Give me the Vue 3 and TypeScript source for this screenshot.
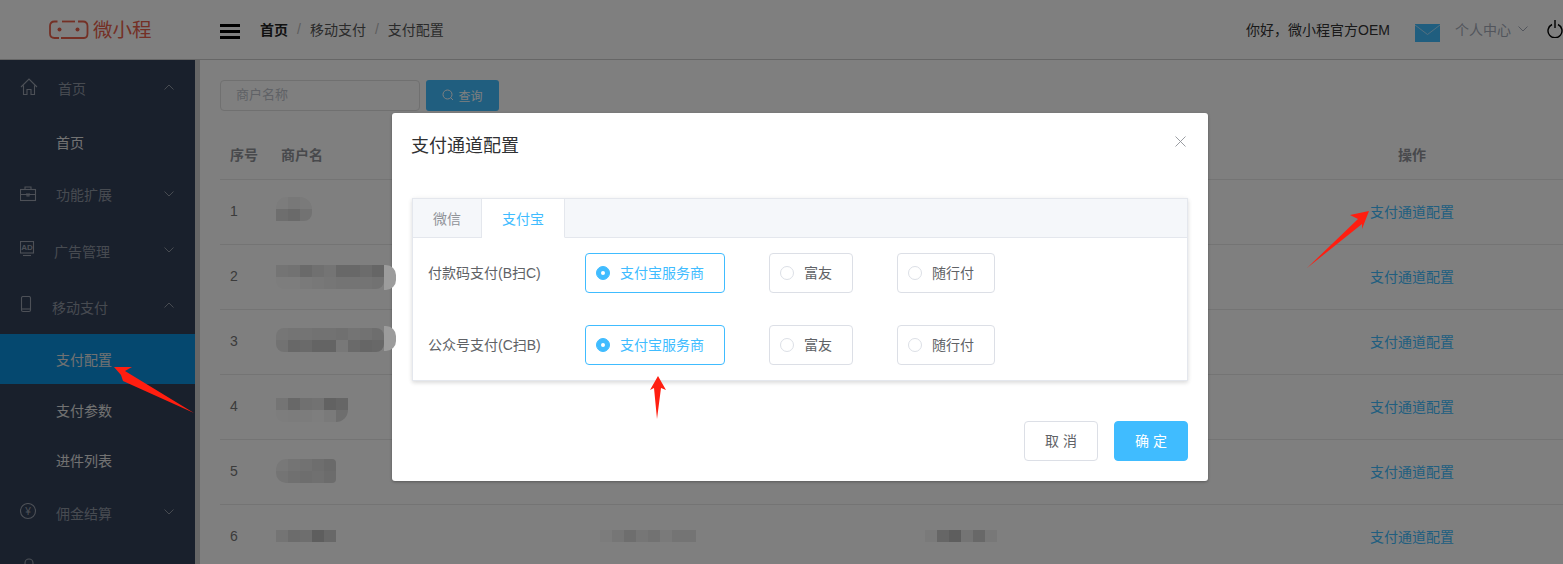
<script setup lang="ts">
interface NavItem { label: string; kind: 'group' | 'sub' | 'active'; h: number; icon?: string; x: number; dy: number; open?: boolean }
const nav: NavItem[] = [
  { label: '首页', kind: 'group', h: 58, icon: 'home', x: 58, dy: -1, open: true },
  { label: '首页', kind: 'sub', h: 50, x: 56, dy: -1 },
  { label: '功能扩展', kind: 'group', h: 56, icon: 'case', x: 56, dy: -2 },
  { label: '广告管理', kind: 'group', h: 56, icon: 'ad', x: 54, dy: -1 },
  { label: '移动支付', kind: 'group', h: 54, icon: 'phone', x: 52, dy: 0, open: true },
  { label: '支付配置', kind: 'active', h: 50, x: 56, dy: 0 },
  { label: '支付参数', kind: 'sub', h: 52, x: 56, dy: 0 },
  { label: '进件列表', kind: 'sub', h: 50, x: 56, dy: -1 },
  { label: '佣金结算', kind: 'group', h: 56, icon: 'yen', x: 56, dy: -1 },
  { label: '', kind: 'group', h: 52, icon: 'user', x: 56, dy: 0 },
]
interface Blur { cols: number; levels: number[]; radius: string; shift: number }
interface Row { no: number; name: Blur; a?: Blur; b?: Blur }
const rows: Row[] = [
  { no: 1, name: { cols: 3, levels: [124, 120, 122, 110, 106, 114], radius: '10px 12px 8px 0', shift: -6 } },
  { no: 2, name: { cols: 9, levels: [116, 114, 106, 112, 116, 104, 104, 108, 102, 125, 125, 122, 120, 118, 116, 116, 116, 114], radius: '0 0 8px 8px', shift: -1 } },
  { no: 3, name: { cols: 9, levels: [118, 116, 116, 114, 114, 112, 116, 114, 110, 114, 104, 106, 100, 100, 120, 106, 102, 104], radius: '8px', shift: -5 } },
  { no: 4, name: { cols: 6, levels: [116, 104, 112, 114, 98, 102, 125, 124, 124, 126, 122, 110], radius: '0 0 12px 8px', shift: 5 } },
  { no: 5, name: { cols: 5, levels: [120, 116, 114, 110, 106, 116, 112, 110, 112, 108], radius: '10px 4px 4px 10px', shift: -3 } },
  {
    no: 6,
    name: { cols: 5, levels: [116, 108, 110, 94, 104], radius: '0', shift: -2 },
    a: { cols: 8, levels: [124, 118, 110, 118, 114, 122, 116, 116], radius: '0', shift: -2 },
    b: { cols: 6, levels: [122, 102, 94, 116, 104, 120], radius: '0', shift: -2 },
  },
]
const grey = (v: number) => `rgb(${v * 2},${v * 2},${v * 2})`
const blurStyle = (b: Blur) => ({
  gridTemplateColumns: `repeat(${b.cols}, 12px)`,
  borderRadius: b.radius,
  marginTop: `${b.shift}px`,
})
const payRows = [
  { label: '付款码支付(B扫C)' },
  { label: '公众号支付(C扫B)' },
]
const channels = [
  { name: '支付宝服务商', on: true },
  { name: '富友', on: false },
  { name: '随行付', on: false },
]
</script>

<template>
  <div class="app">
    <header class="top">
      <div class="logo">
        <svg class="logo-mark" width="40" height="20" viewBox="0 0 40 20" fill="none" stroke="#e8604a" stroke-width="1.8">
          <path d="M8.5 1.5H5.5Q1 1.5 1 6V13.5Q1 18 5.5 18H10" />
          <path d="M13 1.5H26" />
          <path d="M12 18H35Q38.5 18 38.5 13.5V6Q38.500 1.500 34 1.500H29" />
          <circle cx="10.5" cy="9.5" r="2" fill="#e8604a" stroke="none" />
          <circle cx="28.5" cy="9.5" r="2" fill="#e8604a" stroke="none" />
        </svg>
        <span class="logo-text">微小程</span>
      </div>
      <div class="bar">
        <div class="burger"><i></i><i></i><i></i></div>
        <nav class="crumbs">
          <b>首页</b><span class="sep">/</span><span>移动支付</span><span class="sep">/</span><span>支付配置</span>
        </nav>
        <div class="user">
          <span class="hello">你好，微小程官方OEM</span>
          <svg class="mail" width="25" height="18" viewBox="0 0 25 18">
            <rect width="25" height="18" fill="#40bcff" />
            <path d="M0 1L12.5 10.5L25 1" fill="none" stroke="#a8e0ff" stroke-width="1" />
          </svg>
          <span class="me">个人中心</span>
          <svg class="me-chev" width="10" height="6" viewBox="0 0 10 6" fill="none" stroke="#a4abb8" stroke-width="1"><path d="M.5.5L5 5L9.5.5" /></svg>
          <svg class="power" width="16" height="18" viewBox="0 0 16 18" fill="none" stroke="#000" stroke-width="1.4">
            <path d="M5 4.5A7 7 0 1 0 11 4.5" />
            <path d="M8 0V8" />
          </svg>
        </div>
      </div>
    </header>

    <div class="body">
      <aside class="side">
        <div class="side-in">
          <div
            v-for="(n, i) in nav"
            :key="i"
            class="nav-item"
            :class="n.kind"
            :style="{ height: n.h + 'px' }"
          >
            <span v-if="n.icon" class="ico">
              <svg v-if="n.icon === 'home'" width="18" height="18" viewBox="0 0 18 18" fill="none" stroke="currentColor" stroke-width="1.1">
                <path d="M1 9L9 1L17 9M3.5 7.5V16.5H7V11.5H11V16.5H14.5V7.5" />
              </svg>
              <svg v-else-if="n.icon === 'case'" width="18" height="16" viewBox="0 0 18 16" fill="none" stroke="currentColor" stroke-width="1.1">
                <rect x=".5" y="3.5" width="15" height="11" />
                <path d="M5 3.5V1H11V3.5M.5 8.5H15.5M7 7V10H9V7" />
              </svg>
              <svg v-else-if="n.icon === 'ad'" width="16" height="18" viewBox="0 0 16 18" fill="none" stroke="currentColor" stroke-width="1.1">
                <rect x=".5" y=".5" width="13" height="11.5" />
                <path d="M3 14.5H11" />
                <text x="7" y="9" text-anchor="middle" class="ad-txt">AD</text>
              </svg>
              <svg v-else-if="n.icon === 'phone'" width="16" height="18" viewBox="0 0 16 18" fill="none" stroke="currentColor" stroke-width="1.1">
                <rect x="1.5" y=".5" width="9" height="15" rx="1.5" />
                <path d="M1.5 13H10.5" />
              </svg>
              <svg v-else-if="n.icon === 'yen'" width="18" height="18" viewBox="0 0 18 18" fill="none" stroke="currentColor" stroke-width="1.1">
                <circle cx="8" cy="8" r="7.5" />
                <text x="8" y="11.5" text-anchor="middle" class="yen-txt">¥</text>
              </svg>
              <svg v-else width="18" height="18" viewBox="0 0 18 18" fill="none" stroke="currentColor" stroke-width="1.1">
                <circle cx="9" cy="6" r="4" />
              </svg>
            </span>
            <span class="nav-label" :style="{ left: n.x + 'px', marginTop: n.dy * 2 + 'px' }">{{ n.label }}</span>
            <svg v-if="n.kind === 'group' && n.label" class="chev" width="10" height="6" viewBox="0 0 10 6" fill="none" stroke="currentColor" stroke-width="1">
              <path :d="n.open ? 'M.5 5.5L5 1L9.5 5.5' : 'M.5.5L5 5L9.5.5'" />
            </svg>
          </div>
        </div>
      </aside>

      <main class="main">
        <div class="search">
          <div class="input">商户名称</div>
          <div class="btn-q">
            <svg width="12" height="12" viewBox="0 0 12 12" fill="none" stroke="#fff" stroke-width="1"><circle cx="5.5" cy="5.5" r="4.5" /><path d="M8.7 8.7L11 11" /></svg>
            查询
          </div>
        </div>
        <div class="table">
          <div class="tr th">
            <div class="c0">序号</div>
            <div class="c1">商户名</div>
            <div class="c2"></div>
            <div class="c3"></div>
            <div class="c4">操作</div>
          </div>
          <div v-for="r in rows" :key="r.no" class="tr">
            <div class="c0 no">{{ r.no }}</div>
            <div class="c1">
              <div class="blur" :style="blurStyle(r.name)"><i v-for="(l, j) in r.name.levels" :key="j" :style="{ background: grey(l) }"></i></div>
            </div>
            <div class="c2">
              <div v-if="r.a" class="blur" :style="blurStyle(r.a)"><i v-for="(l, j) in r.a.levels" :key="j" :style="{ background: grey(l) }"></i></div>
            </div>
            <div class="c3">
              <div v-if="r.b" class="blur" :style="blurStyle(r.b)"><i v-for="(l, j) in r.b.levels" :key="j" :style="{ background: grey(l) }"></i></div>
            </div>
            <div class="c4 link">支付通道配置</div>
          </div>
        </div>
      </main>
    </div>

    <div class="mask">
      <section class="dialog">
        <div class="d-head">
          <h2>支付通道配置</h2>
          <svg class="close" width="11" height="11" viewBox="0 0 11 11" stroke="#909399" stroke-width=".9"><path d="M.5.5L10.5 10.5M10.5.5L.5 10.5" /></svg>
        </div>
        <div class="card">
          <div class="tabs">
            <div class="tab">微信</div>
            <div class="tab on">支付宝</div>
          </div>
          <div class="panel">
            <div v-for="p in payRows" :key="p.label" class="pay-row">
              <div class="pay-label">{{ p.label }}</div>
              <div class="radios">
                <label v-for="c in channels" :key="c.name" class="radio" :class="{ on: c.on }">
                  <i class="dot"></i><span>{{ c.name }}</span>
                </label>
              </div>
            </div>
          </div>
        </div>
        <div class="d-foot">
          <button class="b-cancel">取 消</button>
          <button class="b-ok">确 定</button>
        </div>
      </section>
    </div>

    <i class="blob blob-a"></i>
    <i class="blob blob-b"></i>

    <svg class="marks" width="1563" height="564" viewBox="0 0 1563 564" fill="#ff1e10">
      <polygon points="114,367 132,367 125,371 194,413 123,381 121,375" />
      <polygon points="1369,211 1350,215 1358,219 1307,268 1362,224 1362,229" />
      <polygon points="658,376 666,390 661,388 657,419 654,388 650,390" />
    </svg>
  </div>
</template>

<style>
html, body { margin: 0; height: 564px; overflow: hidden; background: #fff; }
</style>

<style scoped>
.app {
  position: relative;
  width: 1563px;
  height: 564px;
  overflow: hidden;
  display: flex;
  flex-direction: column;
  background: #fff;
  font-family: "Liberation Sans", "Noto Sans CJK SC", sans-serif;
  font-size: 14px;
  color: #606266;
}
.top { height: 60px; display: flex; flex: none; border-bottom: 1px solid #ccc; box-sizing: border-box; }
.logo { width: 200px; display: flex; align-items: center; padding-left: 49px; box-sizing: border-box; gap: 4px; }
.logo-text { color: #e8604a; font-size: 19.5px; line-height: 20px; }
.bar { flex: 1; display: flex; align-items: center; padding: 0 0 2px 20px; min-width: 0; }
.burger { width: 20px; display: flex; flex-direction: column; gap: 3px; margin-top: 5px; }
.burger i { display: block; height: 3px; background: #000; }
.crumbs { margin-left: 20px; display: flex; align-items: center; color: #555; }
.crumbs b { color: #222; font-weight: 700; }
.sep { color: #bbb; margin: 0 9px; }
.user { margin-left: auto; display: flex; align-items: center; }
.hello { color: #333; margin-right: 25px; font-size: 14px; }
.mail { margin-top: 8px; }
.me { color: #a4abb8; margin-left: 15px; }
.me-chev { margin-left: 7px; }
.power { margin-left: 19px; margin-right: 0; margin-top: 1px; flex: none; }
.body { flex: 1; display: flex; min-height: 0; }
.side { width: 200px; flex: none; box-sizing: border-box; border-right: 5px solid #ccc; background: #324058; overflow: hidden; }
.nav-item { position: relative; display: flex; align-items: center; color: #8f96a3; }
.nav-item.sub { color: #e4e4e4; }
.nav-item.active { color: #e4e4e4; background: #0a90de; }
.ico { margin-left: 20px; display: flex; margin-top: -4px; color: #9aa1ae; }
.nav-label { position: absolute; white-space: nowrap; }
.chev { position: absolute; left: 164px; top: calc(50% - 5px); }
.ad-txt { font-size: 8px; font-weight: 700; fill: currentColor; stroke: none; font-family: "Liberation Sans", sans-serif; }
.yen-txt { font-size: 10px; fill: currentColor; stroke: none; font-family: "Liberation Sans", sans-serif; }
.main { flex: 1; padding: 20px 0 0 20px; min-width: 0; }
.search { display: flex; gap: 6px; height: 31px; }
.input { width: 200px; box-sizing: border-box; border: 1px solid #e0e0e0; border-radius: 4px; padding-left: 15px; line-height: 28px; font-size: 13px; color: #c0c4cc; }
.btn-q { width: 73px; border-radius: 3px; background: #40bcff; color: #fff; font-size: 12px; display: flex; align-items: center; justify-content: center; gap: 4px; padding-bottom: 1px; box-sizing: border-box; }
.table { margin-top: 19px; }
.tr { display: grid; grid-template-columns: 56px 324px 325px 334px 304px; height: 65px; align-items: center; border-bottom: 1px solid #e8e8e8; box-sizing: border-box; }
.tr > .c0, .tr > .c4, .th > .c1 { padding-bottom: 2px; }
.tr > .c4 { padding-left: 2px; }
.th { height: 50px; font-weight: 700; color: #909399; font-size: 14px; }
.th .c0 { padding-left: 10px; }
.th .c1 { padding-left: 5px; }
.no { padding-left: 10px; color: #777; }
.c4 { text-align: center; }
.link { color: #40bcff; font-size: 14px; }
.blur { display: grid; grid-auto-rows: 12px; overflow: hidden; width: max-content; }
.blur i { display: block; }
.mask { position: absolute; inset: 0; background: rgba(0, 0, 0, .5); }
.dialog { position: relative; width: 816px; height: 368px; margin: 113px 0 0 392px; background: #fff; border-radius: 3px; box-shadow: 0 1px 3px rgba(0, 0, 0, .3); box-sizing: border-box; padding: 20px; display: flex; flex-direction: column; }
.d-head { display: flex; justify-content: space-between; height: 65px; }
.d-head h2 { margin: 1px 0 0 -1px; font-size: 18px; font-weight: 400; color: #303133; line-height: 24px; }
.close { margin: 3px 2px 0 0; }
.card { border: 1px solid #e4e7ed; box-shadow: 0 2px 4px rgba(0, 0, 0, .12), 0 0 6px rgba(0, 0, 0, .04); height: 183px; box-sizing: border-box; }
.tabs { display: flex; height: 39px; box-sizing: border-box; background: #f5f7fa; border-bottom: 1px solid #e4e7ed; }
.tab { padding: 0 20px; line-height: 40px; height: 39px; box-sizing: border-box; border-right: 1px solid #e4e7ed; color: #909399; width: 69px; font-size: 14px; }
.tab.on { background: #fff; color: #40bcff; width: 83px; border-bottom: 1px solid #fff; text-align: center; padding: 0; }
.panel { padding: 15px 0 0 15px; display: flex; flex-direction: column; gap: 32px; }
.pay-row { display: flex; align-items: center; height: 40px; }
.pay-label { width: 157px; font-size: 14px; padding-bottom: 2px; }
.radios { display: flex; gap: 44px; }
.radio { height: 40px; box-sizing: border-box; border: 1px solid #dcdfe6; border-radius: 4px; display: flex; align-items: center; padding: 0 20px 0 10px; gap: 10px; font-size: 14px; }
.radio span { padding-bottom: 2px; }
.radio.on { border-color: #40bcff; color: #40bcff; }
.dot { width: 14px; height: 14px; box-sizing: border-box; border: 1px solid #dcdfe6; border-radius: 50%; display: block; position: relative; }
.radio.on .dot { background: #40bcff; border-color: #40bcff; }
.radio.on .dot::after { content: ""; position: absolute; left: 4px; top: 4px; width: 4px; height: 4px; border-radius: 50%; background: #fff; }
.d-foot { display: flex; justify-content: flex-end; gap: 16px; margin-top: 40px; }
.d-foot button { width: 74px; height: 40px; border-radius: 4px; font: inherit; font-size: 14px; padding: 0 0 2px; white-space: pre; }
.b-cancel { background: #fff; border: 1px solid #dcdfe6; color: #606266; }
.b-ok { background: #40bcff; border: 1px solid #40bcff; color: #fff; }
.blob { position: absolute; left: 384px; width: 12px; background: #9c9c9c; border-radius: 0 10px 10px 0; display: block; }
.blob-a { top: 265px; height: 25px; }
.blob-b { top: 326px; height: 25px; }
.marks { position: absolute; left: 0; top: 0; pointer-events: none; }
</style>
